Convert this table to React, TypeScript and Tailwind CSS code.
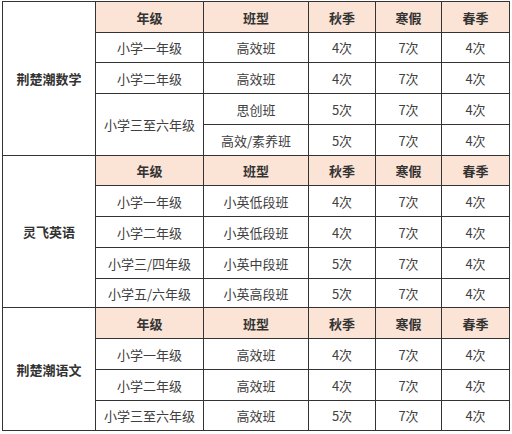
import React from "react";

const B = "border border-[#333333]";
const H = `${B} bg-[#fbe4d5] font-bold text-[#333]`;
const C = `${B} text-[#404040]`;

type Row = { grade?: string; span?: number; cls: string; a: string; w: string; s: string; h: string };

function Section({ name, hh, rows, total }: { name: string; hh: string; rows: Row[]; total: number }) {
  return (
    <>
      <tr className={hh}>
        <td rowSpan={total} className={`${B} font-bold text-[#333]`}>{name}</td>
        <td className={H}>年级</td>
        <td className={H}>班型</td>
        <td className={H}>秋季</td>
        <td className={H}>寒假</td>
        <td className={H}>春季</td>
      </tr>
      {rows.map((r, i) => (
        <tr key={i} className={r.h}>
          {r.grade !== undefined && (
            <td rowSpan={r.span ?? 1} className={C}>{r.grade}</td>
          )}
          <td className={C}>{r.cls}</td>
          <td className={C}>{r.a}</td>
          <td className={C}>{r.w}</td>
          <td className={C}>{r.s}</td>
        </tr>
      ))}
    </>
  );
}

export default function App() {
  return (
    <div className="w-[512px] h-[434px] bg-white pl-[2px] pt-[1px] font-['Noto_Sans_CJK_SC','Noto_Sans',sans-serif]">
      <table className="table-fixed border-collapse text-center text-[13px] leading-none w-[507px]">
        <colgroup>
          <col className="w-[93px]" />
          <col className="w-[108px]" />
          <col className="w-[105px]" />
          <col className="w-[67px]" />
          <col className="w-[66px]" />
          <col className="w-[68px]" />
        </colgroup>
        <tbody>
          <Section
            name="荆楚潮数学"
            hh="h-[31px]"
            total={5}
            rows={[
              { grade: "小学一年级", cls: "高效班", a: "4次", w: "7次", s: "4次", h: "h-[30px]" },
              { grade: "小学二年级", cls: "高效班", a: "4次", w: "7次", s: "4次", h: "h-[31px]" },
              { grade: "小学三至六年级", span: 2, cls: "思创班", a: "5次", w: "7次", s: "4次", h: "h-[31px]" },
              { cls: "高效/素养班", a: "5次", w: "7次", s: "4次", h: "h-[31px]" },
            ]}
          />
          <Section
            name="灵飞英语"
            hh="h-[30px]"
            total={5}
            rows={[
              { grade: "小学一年级", cls: "小英低段班", a: "4次", w: "7次", s: "4次", h: "h-[31px]" },
              { grade: "小学二年级", cls: "小英低段班", a: "4次", w: "7次", s: "4次", h: "h-[31px]" },
              { grade: "小学三/四年级", cls: "小英中段班", a: "5次", w: "7次", s: "4次", h: "h-[31px]" },
              { grade: "小学五/六年级", cls: "小英高段班", a: "5次", w: "7次", s: "4次", h: "h-[29px]" },
            ]}
          />
          <Section
            name="荆楚潮语文"
            hh="h-[31px]"
            total={4}
            rows={[
              { grade: "小学一年级", cls: "高效班", a: "4次", w: "7次", s: "4次", h: "h-[31px]" },
              { grade: "小学二年级", cls: "高效班", a: "4次", w: "7次", s: "4次", h: "h-[31px]" },
              { grade: "小学三至六年级", cls: "高效班", a: "5次", w: "7次", s: "4次", h: "h-[30px]" },
            ]}
          />
        </tbody>
      </table>
    </div>
  );
}
